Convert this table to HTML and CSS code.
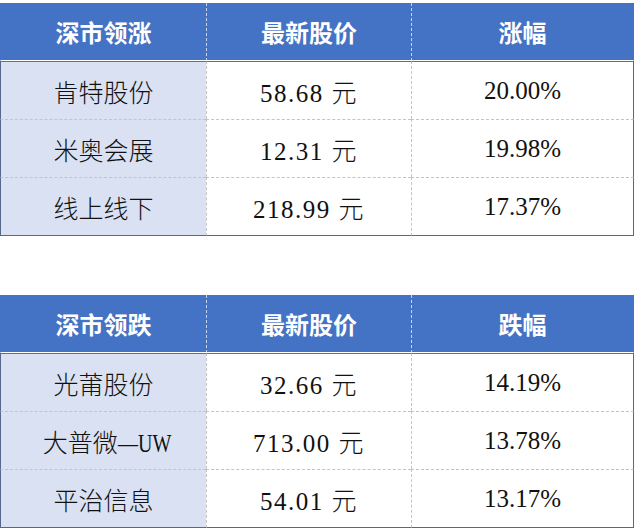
FILE: index.html
```html
<!DOCTYPE html>
<html lang="zh">
<head>
<meta charset="utf-8">
<link rel="stylesheet" href="styles.css">
</head>
<body>
<div class="page">
<table class="stock">
  <colgroup><col class="c1"><col class="c2"><col class="c3"></colgroup>
  <thead>
    <tr><th>深市领涨</th><th>最新股价</th><th>涨幅</th></tr>
  </thead>
  <tbody>
    <tr><td>肯特股份</td><td class="price">58.68 元</td><td>20.00%</td></tr>
    <tr><td>米奥会展</td><td class="price">12.31 元</td><td>19.98%</td></tr>
    <tr><td>线上线下</td><td class="price">218.99 元</td><td>17.37%</td></tr>
  </tbody>
</table>
<table class="stock">
  <colgroup><col class="c1"><col class="c2"><col class="c3"></colgroup>
  <thead>
    <tr><th>深市领跌</th><th>最新股价</th><th>跌幅</th></tr>
  </thead>
  <tbody>
    <tr><td>光莆股份</td><td class="price">32.66 元</td><td>14.19%</td></tr>
    <tr><td>大普微<span class="narrow">—UW</span></td><td class="price">713.00 元</td><td>13.78%</td></tr>
    <tr><td>平治信息</td><td class="price">54.01 元</td><td>13.17%</td></tr>
  </tbody>
</table>
</div>
</body>
</html>
```
FILE: styles.css
```css
html, body {
  margin: 0;
  padding: 0;
  background: #ffffff;
}
.page {
  padding-top: 3px;
  display: flex;
  flex-direction: column;
  gap: 59px;
}
.stock {
  width: 634px;
  border-collapse: separate;
  border-spacing: 0;
  table-layout: fixed;
  font-family: "Liberation Serif", "Noto Sans CJK SC", serif;
  font-size: 25px;
}
.c1 { width: 206px; }
.c2 { width: 205px; }
.c3 { width: 223px; }
.stock th {
  height: 57px;
  padding: 0;
  background: #4472c4;
  color: #ffffff;
  font-family: "Noto Sans CJK SC", sans-serif;
  font-weight: 700;
  font-size: 24px;
  text-align: center;
  vertical-align: middle;
  border-bottom: 1px solid #ffffff;
  border-left: 1px dashed #c6d4ee;
}
.stock th:first-child {
  border-left: 1px solid #4472c4;
}
.stock th:last-child {
  border-right: 1px solid #4472c4;
}
.stock td {
  height: 57px;
  padding: 0;
  color: #111111;
  font-weight: 300;
  text-align: center;
  vertical-align: middle;
  border-top: 1px dashed #c4c4c4;
  border-left: 1px dashed #c4c4c4;
  background: #ffffff;
}
.stock td.price {
  letter-spacing: 1.5px;
}
.narrow {
  display: inline-block;
  transform: scaleX(0.8);
  transform-origin: left center;
  margin-right: -20px;
}
.stock tbody tr:first-child td {
  border-top: 1px solid #4472c4;
}
.stock td:first-child {
  background: #d9e1f2;
  border-left: 1px solid #56698a;
}
.stock td:last-child {
  border-right: 1px solid #56698a;
}
.stock tbody tr:last-child td {
  border-bottom: 1px solid #56698a;
}
```
